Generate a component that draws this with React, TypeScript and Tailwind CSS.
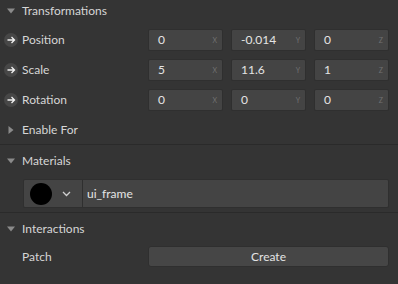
import React from "react";

const ROWS = [
  { label: "Position", v: ["0", "-0.014", "0"] },
  { label: "Scale", v: ["5", "11.6", "1"] },
  { label: "Rotation", v: ["0", "0", "0"] },
];

const AXES = ["X", "Y", "Z"];

function Caret({ open }: { open: boolean }) {
  return (
    <div className="w-[22px] flex items-center justify-center shrink-0">
      {open ? (
        <svg width="8" height="6" viewBox="0 0 8 6">
          <path d="M0 0.5h8L4 5.5z" fill="#8a8a8a" />
        </svg>
      ) : (
        <svg width="6" height="8" viewBox="0 0 6 8">
          <path d="M0.5 0v8L5.5 4z" fill="#8a8a8a" />
        </svg>
      )}
    </div>
  );
}

function Header({ title, open, h }: { title: string; open: boolean; h: string }) {
  return (
    <div className={`flex items-center ${h}`}>
      <Caret open={open} />
      <span className="text-[12px] text-[#d6d6d6]">{title}</span>
    </div>
  );
}

function ArrowDot() {
  return (
    <div className="w-[22px] flex items-center justify-center shrink-0">
      <div className="w-[14px] h-[14px] rounded-full bg-[#474747] flex items-center justify-center">
        <svg width="9" height="8" viewBox="0 0 9 8" fill="none" stroke="#f2f2f2" strokeWidth="1.3">
          <path d="M0.5 4h7M4.5 1l3 3-3 3" />
        </svg>
      </div>
    </div>
  );
}

export default function App() {
  return (
    <div
      className="w-[398px] h-[284px] bg-[#343434] overflow-hidden"
      style={{ fontFamily: 'Lato, "Noto Sans", sans-serif' }}
    >
      {/* Transformations */}
      <Header title="Transformations" open h="h-[20px] pt-[2px]" />
      <div className="flex flex-col gap-[8px] mt-[9px]">
        {ROWS.map((r) => (
          <div key={r.label} className="flex items-center h-[22px]">
            <ArrowDot />
            <span className="text-[12px] text-[#d6d6d6] w-[126px]">{r.label}</span>
            <div className="flex gap-[8px]">
              {r.v.map((val, i) => (
                <div
                  key={i}
                  className="w-[75px] h-[22px] bg-[#444444] border border-[#2f2f2f] rounded-[2px] flex items-center justify-between pl-[9px] pr-[5px]"
                >
                  <span className="text-[12px] text-[#e4e4e4]">{val}</span>
                  <span className="text-[7px] text-[#707070]">{AXES[i]}</span>
                </div>
              ))}
            </div>
          </div>
        ))}
      </div>

      {/* Enable For */}
      <Header title="Enable For" open={false} h="h-[33px] pt-[5px]" />
      <div className="h-px bg-[#2a2a2a]" />

      {/* Materials */}
      <Header title="Materials" open h="h-[30px] pt-[2px]" />
      <div className="ml-[23px] w-[366px] h-[29px] mt-[4px] bg-[#444444] border border-[#2f2f2f] rounded-[2px] flex items-center">
        <div className="w-[59px] h-full flex items-center border-r border-[#2f2f2f]">
          <div className="w-[22px] h-[22px] rounded-full bg-black ml-[6px]" />
          <svg className="ml-[10px]" width="9" height="6" viewBox="0 0 9 6" fill="none" stroke="#d0d0d0" strokeWidth="1.3">
            <path d="M1 1l3.5 3.5L8 1" />
          </svg>
        </div>
        <span className="text-[12px] text-[#e4e4e4] ml-[4px]">ui_frame</span>
      </div>
      <div className="h-[4px]" />
      <div className="h-px bg-[#2a2a2a]" />

      {/* Interactions */}
      <Header title="Interactions" open h="h-[30px] pt-[2px]" />
      <div className="flex items-center h-[21px] mt-[3px]">
        <div className="w-[22px]" />
        <span className="text-[12px] text-[#d6d6d6] w-[126px]">Patch</span>
        <div className="w-[241px] h-[21px] bg-[#464646] border border-[#2f2f2f] rounded-[3px] flex items-center justify-center">
          <span className="text-[12px] text-[#e4e4e4]">Create</span>
        </div>
      </div>
    </div>
  );
}
